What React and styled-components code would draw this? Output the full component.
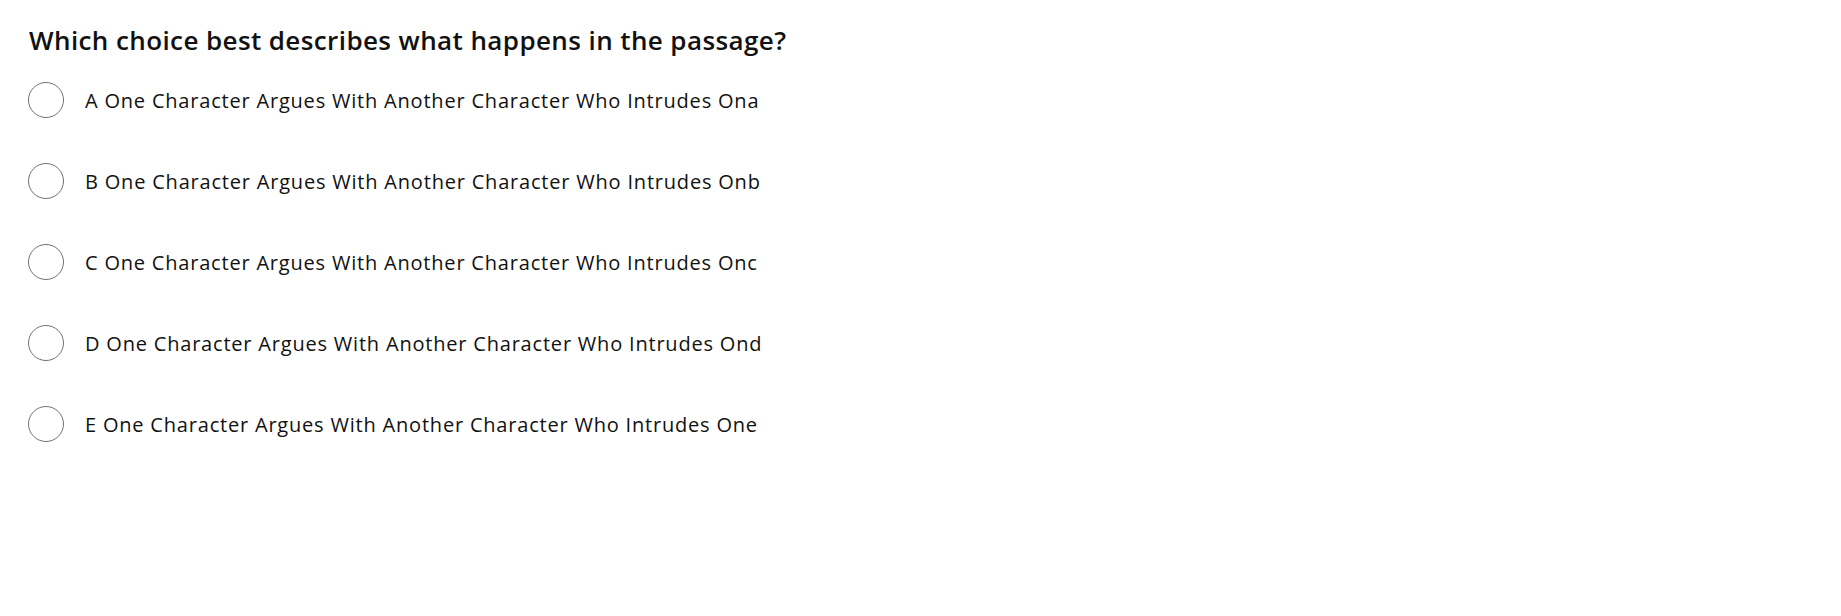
import React from 'react'
import styled, { createGlobalStyle } from 'styled-components'

const GlobalStyle = createGlobalStyle`
  body {
    margin: 0;
    background: #fff;
    font-family: 'Open Sans', 'Liberation Sans', sans-serif;
    color: #111;
  }
`

const Wrapper = styled.div`
  padding: 24px 28px;
`

const Question = styled.h2`
  margin: 0 0 26px 1px;
  font-size: 26px;
  line-height: 32px;
  font-weight: 600;
  letter-spacing: 0.4px;
  color: #111;
`

const Options = styled.ul`
  list-style: none;
  margin: 0;
  padding: 0;
  display: flex;
  flex-direction: column;
  gap: 45px;
`

const Option = styled.li`
  display: flex;
  align-items: center;
  gap: 21px;
  height: 36px;
  cursor: pointer;
`

const Radio = styled.span`
  box-sizing: border-box;
  width: 36px;
  height: 36px;
  flex-shrink: 0;
  border-radius: 50%;
  border: 1px solid #707070;
  background: #fff;
`

const Label = styled.span`
  font-size: 20px;
  font-weight: 400;
  letter-spacing: 0.8px;
  color: #111;
`

const choices = ['a', 'b', 'c', 'd', 'e']

const App = () => {
  return (
    <Wrapper>
      <GlobalStyle />
      <Question>Which choice best describes what happens in the passage?</Question>
      <Options>
        {choices.map((c) => (
          <Option key={c}>
            <Radio />
            <Label>
              {c.toUpperCase()} One Character Argues With Another Character Who Intrudes On{c}
            </Label>
          </Option>
        ))}
      </Options>
    </Wrapper>
  )
}

export default App
